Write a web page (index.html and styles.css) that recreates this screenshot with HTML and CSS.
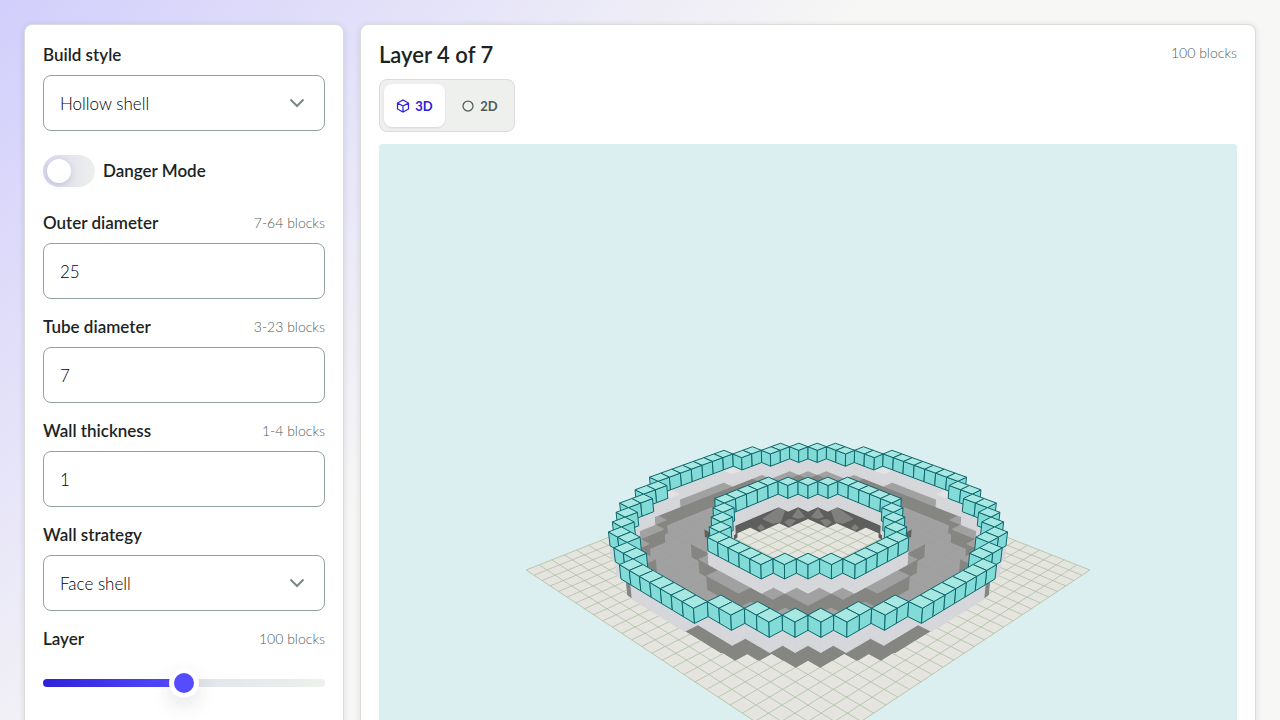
FILE: index.html
```html
<!DOCTYPE html>
<html lang="en">
<head>
  <meta charset="UTF-8">
  <meta name="viewport" content="width=device-width, initial-scale=1.0">
  <title>Torus Generator</title>
  <link rel="stylesheet" href="styles.css">
</head>
<body>
  <div class="page">
    <form class="card controls">
      <div class="field">
        <div class="field-head">
          <label for="buildStyle">Build style</label>
        </div>
        <div class="select">
          <select id="buildStyle">
            <option>Hollow shell</option>
            <option>Solid</option>
          </select>
          <svg class="chevron" viewBox="0 0 16 16"><path d="M1.500 4.500l6.500 6.500 6.500-6.500"/></svg>
        </div>
      </div>

      <label class="switch">
        <input type="checkbox">
        <span>Danger Mode</span>
      </label>

      <div class="field">
        <div class="field-head">
          <label for="outer">Outer diameter</label>
          <span class="hint">7-64 blocks</span>
        </div>
        <input class="number" id="outer" type="number" min="7" max="64" value="25">
      </div>

      <div class="field">
        <div class="field-head">
          <label for="tube">Tube diameter</label>
          <span class="hint">3-23 blocks</span>
        </div>
        <input class="number" id="tube" type="number" min="3" max="23" value="7">
      </div>

      <div class="field">
        <div class="field-head">
          <label for="wall">Wall thickness</label>
          <span class="hint">1-4 blocks</span>
        </div>
        <input class="number" id="wall" type="number" min="1" max="4" value="1">
      </div>

      <div class="field">
        <div class="field-head">
          <label for="strategy">Wall strategy</label>
        </div>
        <div class="select">
          <select id="strategy">
            <option>Face shell</option>
            <option>Full shell</option>
          </select>
          <svg class="chevron" viewBox="0 0 16 16"><path d="M1.500 4.500l6.500 6.500 6.500-6.500"/></svg>
        </div>
      </div>

      <div class="field">
        <div class="field-head">
          <label for="layer">Layer</label>
          <span class="hint">100 blocks</span>
        </div>
        <input class="range" id="layer" type="range" min="1" max="7" value="4">
      </div>
    </form>

    <main class="card viewer">
      <header class="viewer-head">
        <h1>Layer 4 of 7</h1>
        <span class="count">100 blocks</span>
      </header>
      <div class="tabs">
        <button type="button" class="tab active">
          <svg viewBox="0 0 14 14"><path d="M7 1l5.500 3v6L7 13l-5.500-3V4zM1.500 4L7 7l5.500-3M7 7v6"/></svg>
          3D
        </button>
        <button type="button" class="tab">
          <svg viewBox="0 0 14 14"><circle cx="7" cy="7" r="5"/></svg>
          2D
        </button>
      </div>
      <canvas class="stage" id="stage"></canvas>
    </main>
  </div>

  <script src="scene.js"></script>
</body>
</html>
```
FILE: scene.js
```js
const OUTER = 25;
const TUBE = 7;
const LAYER = 3;
const GRID = OUTER + 2;

const camera = { focal: 970, distance: 65.7, sin: 0.495, cos: 0.869 };

const colors = {
  current: { top: '#a8e8e3', side: '#82dbd7', stroke: '#0e666c' },
  previous: { top: '#e1e3e4', side: '#d6d7da' },
  older: { top: '#a1a1a1', side: '#858582' },
  hole: { top: '#a1a1a1', side: '#5e5e5c' }
};

// Lighter facets on the back wall of the hole, mirrored left and right
const facets = [
  [[-29, 363], [-23, 367], [-27, 378], [-35, 380], [-46, 375]],
  [[-10, 364], [-3, 373], [-10, 375], [-16, 373]],
  [[-24, 378], [-19, 375], [-12, 376], [-18, 383]],
  [[-51, 384], [-47, 380], [-43, 384], [-47, 387]]
];

const canvas = document.getElementById('stage');
const ctx = canvas.getContext('2d');

// World position to canvas position, the base canvas is 858 wide
function project(x, y, z) {
  const side = (x - z) / Math.SQRT2;
  const away = -(x + z) / Math.SQRT2;
  const depth = camera.distance + away * camera.cos - y * camera.sin;
  const up = away * camera.sin + y * camera.cos;
  const scale = camera.focal / depth;
  return [429 + side * scale, 426 - up * scale];
}

function inside(x, y, z) {
  const r = Math.hypot(x, z) - (OUTER - TUBE) / 2;
  const h = y - (TUBE - 1) / 2;
  return r * r + h * h <= (TUBE / 2) ** 2;
}

function isShell(x, y, z) {
  return inside(x, y, z) && !(
    inside(x + 1, y, z) && inside(x - 1, y, z) &&
    inside(x, y + 1, z) && inside(x, y - 1, z) &&
    inside(x, y, z + 1) && inside(x, y, z - 1));
}

function polygon(points, fill, stroke) {
  ctx.beginPath();
  points.forEach(p => ctx.lineTo(...project(...p)));
  ctx.closePath();
  ctx.fillStyle = fill;
  ctx.fill();
  ctx.strokeStyle = stroke || fill;
  ctx.lineWidth = 1;
  ctx.stroke();
}

function line(a, b) {
  ctx.beginPath();
  ctx.moveTo(...project(...a));
  ctx.lineTo(...project(...b));
  ctx.stroke();
}

function drawGrid(color) {
  const g = GRID / 2;
  ctx.strokeStyle = color;
  ctx.lineWidth = 1;
  for (let i = -g; i <= g; i++) {
    line([i, 0, -g], [i, 0, g]);
    line([-g, 0, i], [g, 0, i]);
  }
}

function drawGround() {
  const g = GRID / 2;
  polygon([[-g, 0, -g], [g, 0, -g], [g, 0, g], [-g, 0, g]], '#e5e4df');
  drawGrid('rgba(165, 188, 155, 0.7)');
}

function drawFacets() {
  ctx.fillStyle = '#80807e';
  [-1, 1].forEach(flip => {
    facets.forEach(points => {
      ctx.beginPath();
      points.forEach(p => ctx.lineTo(429 + p[0] * flip, p[1]));
      ctx.fill();
    });
  });
}

function drawBlock(x, y, z) {
  const a = x - 0.5, b = x + 0.5, c = z - 0.5, d = z + 0.5;
  let tone = colors.older;
  if (y === LAYER) {
    tone = colors.current;
  } else if (y === LAYER - 1) {
    tone = colors.previous;
  } else if (Math.hypot(x, z) < 9 && x + z < 0) {
    tone = colors.hole;
  }
  if (!isShell(x, y, z + 1)) {
    polygon([[a, y, d], [b, y, d], [b, y + 1, d], [a, y + 1, d]], tone.side, tone.stroke);
  }
  if (!isShell(x + 1, y, z)) {
    polygon([[b, y, c], [b, y, d], [b, y + 1, d], [b, y + 1, c]], tone.side, tone.stroke);
  }
  polygon([[a, y + 1, c], [b, y + 1, c], [b, y + 1, d], [a, y + 1, d]], tone.top, tone.stroke);
  if (y === 0) {
    ctx.strokeStyle = 'rgba(125, 125, 122, 0.2)';
    line([a, 1, d], [b, 1, d]);
    line([b, 1, c], [b, 1, d]);
  }
}

function draw() {
  const ratio = window.devicePixelRatio || 1;
  const size = canvas.clientWidth;
  canvas.width = size * ratio;
  canvas.height = size * ratio;
  ctx.scale(size * ratio / 858, size * ratio / 858);
  ctx.lineJoin = 'round';
  drawGround();

  const half = (OUTER - 1) / 2;
  for (let y = 0; y <= LAYER; y++) {
    const blocks = [];
    for (let x = -half; x <= half; x++) {
      for (let z = -half; z <= half; z++) {
        if (isShell(x, y, z)) blocks.push([x, z]);
      }
    }
    // far blocks first
    blocks.sort((p, q) => (p[0] + p[1]) - (q[0] + q[1]));
    blocks.forEach(p => drawBlock(p[0], y, p[1]));
    if (y === LAYER - 2) drawFacets();
  }
}

draw();
window.addEventListener('resize', draw);
```
FILE: styles.css
```css
:root {
  --ink: #1c2422;
  --muted: #4f5c58;
  --line: #93a29d;
  --edge: #d9dcd9;
  --soft: #eef0ed;
  --blue: #2d22d8;
  --violet: #564cff;
}

* {
  box-sizing: border-box;
  margin: 0;
  padding: 0;
}

body {
  font-family: Lato, sans-serif;
  font-size: 16px;
  line-height: 24px;
  color: var(--ink);
  background: linear-gradient(135deg, #d2cefc 0, #f7f7f5 620px) no-repeat #f7f7f5;
}

.page {
  display: grid;
  grid-template-columns: 320px 1fr;
  gap: 16px;
  padding: 24px;
}

.card {
  min-width: 0;
  background: white;
  border: 1px solid var(--edge);
  border-radius: 8px;
  padding: 18px;
  box-shadow: 0 1px 6px rgba(30, 40, 60, 0.12);
}

.controls {
  display: flex;
  flex-direction: column;
  gap: 16px;
}

.field {
  display: flex;
  flex-direction: column;
  gap: 8px;
}

.field-head {
  display: flex;
  justify-content: space-between;
}

.field-head label,
.switch {
  font-size: 17px;
  font-weight: 600;
}

.hint {
  font-size: 14px;
  font-weight: 300;
  color: var(--muted);
}

.number,
.select select {
  width: 100%;
  height: 56px;
  padding: 0 16px;
  border: 1px solid var(--line);
  border-radius: 8px;
  background: white;
  color: black;
  font-family: inherit;
  font-size: 17px;
  font-weight: 300;
  appearance: none;
}

.number {
  appearance: textfield;
}

.number::-webkit-inner-spin-button {
  appearance: none;
}

.select {
  position: relative;
}

.chevron {
  position: absolute;
  top: 20px;
  right: 20px;
  width: 16px;
  height: 16px;
  fill: none;
  stroke: #7b8884;
  stroke-width: 2;
  pointer-events: none;
}

.switch {
  display: flex;
  align-items: center;
  gap: 8px;
  margin: 8px 0;
}

.switch input {
  appearance: none;
  width: 52px;
  height: 32px;
  padding: 4px;
  border-radius: 16px;
  background: linear-gradient(90deg, #d8d8ec, #eef0ed);
}

.switch input::before {
  content: "";
  display: block;
  width: 24px;
  height: 24px;
  border-radius: 50%;
  background: white;
  box-shadow: 0 2px 6px rgba(40, 40, 80, 0.15);
}

.switch input:checked::before {
  margin-left: 20px;
}

.range {
  appearance: none;
  width: 100%;
  height: 48px;
  background: none;
}

.range::-webkit-slider-runnable-track {
  height: 8px;
  border-radius: 4px;
  background: linear-gradient(90deg, var(--blue), var(--violet) 50%, #e0e3ea 50%, #eef0ed);
}

.range::-webkit-slider-thumb {
  appearance: none;
  width: 30px;
  height: 30px;
  margin-top: -11px;
  border: 5px solid white;
  border-radius: 50%;
  background: var(--violet);
  box-shadow: 0 8px 20px rgba(30, 40, 60, 0.12);
}

.viewer {
  display: flex;
  flex-direction: column;
  gap: 12px;
}

.viewer-head {
  display: flex;
  justify-content: space-between;
}

.viewer-head h1 {
  font-size: 22px;
  font-weight: 600;
  line-height: 24px;
}

.count {
  font-size: 14px;
  font-weight: 300;
  line-height: 20px;
  color: var(--muted);
}

.tabs {
  display: flex;
  align-self: flex-start;
  gap: 4px;
  padding: 4px;
  border: 1px solid var(--edge);
  border-radius: 8px;
  background: var(--soft);
}

.tab {
  display: flex;
  align-items: center;
  justify-content: center;
  gap: 5px;
  width: 61px;
  height: 43px;
  border: none;
  border-radius: 8px;
  background: none;
  color: var(--muted);
  font-family: inherit;
  font-size: 13px;
  font-weight: 700;
  cursor: pointer;
}

.tab.active {
  background: white;
  color: var(--blue);
  box-shadow: 0 1px 2px rgba(30, 40, 60, 0.12);
}

.tab svg {
  width: 14px;
  height: 14px;
  fill: none;
  stroke: currentColor;
  stroke-width: 1.25;
}

.stage {
  display: block;
  width: 100%;
  aspect-ratio: 1;
  border-radius: 3px;
  background: #dbeff1;
}
```
